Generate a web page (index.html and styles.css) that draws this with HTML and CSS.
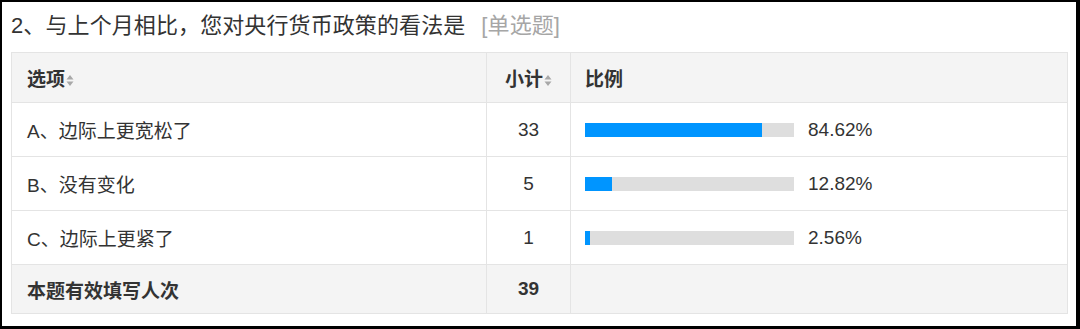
FILE: index.html
```html
<!DOCTYPE html>
<html lang="zh">
<head>
<meta charset="utf-8">
<link rel="stylesheet" href="styles.css">
</head>
<body>
<div class="frame">
  <div class="title">2、与上个月相比，您对央行货币政策的看法是<span class="qtype">[单选题]</span></div>
  <table class="stats">
    <colgroup>
      <col class="c-opt"><col class="c-cnt"><col class="c-pct">
    </colgroup>
    <thead>
      <tr>
        <th class="opt">选项<svg class="sort" viewBox="0 0 8 13" width="8" height="13"><path d="M4 1 L7.5 5.5 L0.5 5.5 Z M4 12 L7.5 7.5 L0.5 7.5 Z"/></svg></th>
        <th class="cnt">小计<svg class="sort" viewBox="0 0 8 13" width="8" height="13"><path d="M4 1 L7.5 5.5 L0.5 5.5 Z M4 12 L7.5 7.5 L0.5 7.5 Z"/></svg></th>
        <th class="pct">比例</th>
      </tr>
    </thead>
    <tbody>
      <tr>
        <td class="opt">A、边际上更宽松了</td>
        <td class="cnt">33</td>
        <td class="pct"><div class="ratio"><div class="bar"><div class="fill" style="width:84.62%"></div></div><span class="val">84.62%</span></div></td>
      </tr>
      <tr>
        <td class="opt">B、没有变化</td>
        <td class="cnt">5</td>
        <td class="pct"><div class="ratio"><div class="bar"><div class="fill" style="width:12.82%"></div></div><span class="val">12.82%</span></div></td>
      </tr>
      <tr>
        <td class="opt">C、边际上更紧了</td>
        <td class="cnt">1</td>
        <td class="pct"><div class="ratio"><div class="bar"><div class="fill" style="width:2.56%"></div></div><span class="val">2.56%</span></div></td>
      </tr>
    </tbody>
    <tfoot>
      <tr>
        <td class="opt">本题有效填写人次</td>
        <td class="cnt">39</td>
        <td class="pct"></td>
      </tr>
    </tfoot>
  </table>
</div>
</body>
</html>
```
FILE: styles.css
```css
html, body {
  margin: 0;
  padding: 0;
  background: #fff;
}
.frame {
  width: 1080px;
  height: 329px;
  box-sizing: border-box;
  border-style: solid;
  border-color: #000;
  border-width: 2px 4px 3px 2px;
  padding: 10px 9px 0 9px;
  background: #fff;
  font-family: "Liberation Sans", "Noto Sans CJK SC", sans-serif;
  color: #333;
}
.title {
  font-size: 22px;
  line-height: 28px;
  color: #333;
  white-space: nowrap;
  letter-spacing: 0.1px;
}
.qtype {
  color: #a6a6a6;
  margin-left: 16px;
}
.stats {
  margin-top: 12px;
  width: 1056px;
  border-collapse: collapse;
  table-layout: fixed;
  font-size: 19px;
}
.c-opt { width: 475px; }
.c-cnt { width: 84px; }
.c-pct { width: 497px; }
.stats th, .stats td {
  border: 1px solid #e4e4e4;
  padding: 0 14px;
  text-align: left;
  vertical-align: middle;
}
.stats thead th {
  background: #f4f4f4;
  font-weight: bold;
  height: 49px;
}
.stats tbody td {
  height: 53px;
}
.stats tfoot td {
  background: #f4f4f4;
  font-weight: bold;
  height: 48px;
}
.stats .opt {
  padding-left: 15px;
}
.stats .cnt {
  text-align: center;
  padding: 0;
}
.sort {
  fill: #a8a8a8;
  vertical-align: -1px;
  margin-left: 1px;
}
.ratio {
  display: flex;
  align-items: center;
  gap: 14px;
}
.bar {
  width: 209px;
  height: 14px;
  background: #dedede;
  display: flex;
}
.fill {
  height: 100%;
  background: #0095ff;
}
.val {
  white-space: nowrap;
}
```
